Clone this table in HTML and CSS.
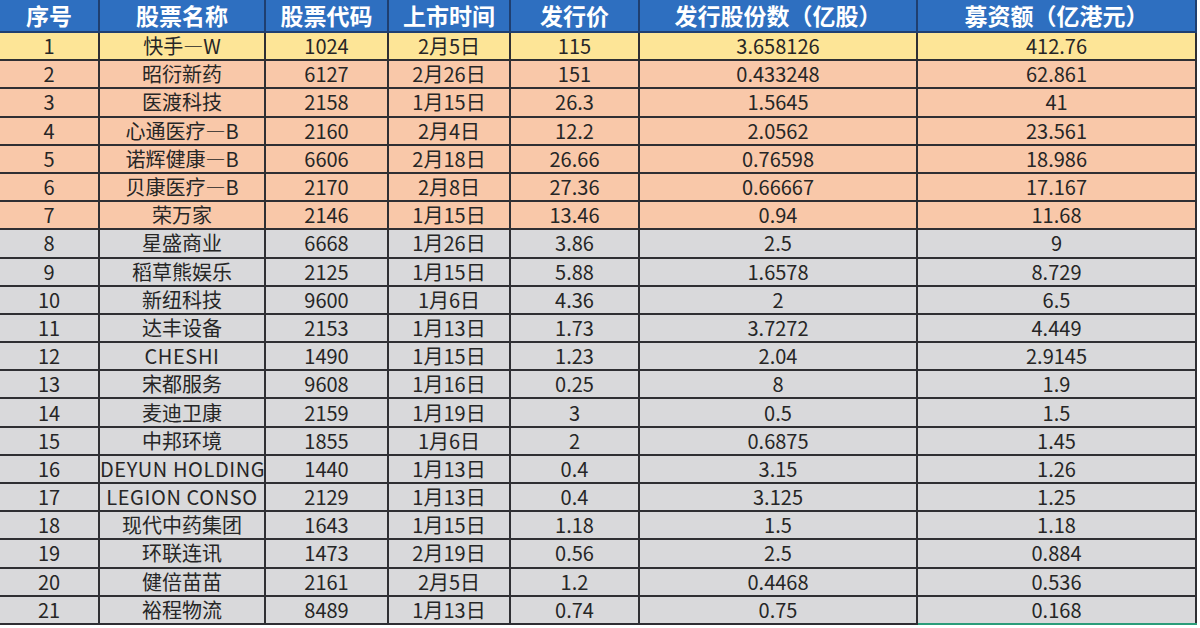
FILE: index.html
```html
<!DOCTYPE html>
<html lang="zh">
<head>
<meta charset="utf-8">
<link rel="stylesheet" href="styles.css">
</head>
<body>
<table class="ipo">
<colgroup>
<col class="c1"><col class="c2"><col class="c3"><col class="c4"><col class="c5"><col class="c6"><col class="c7">
</colgroup>
<thead>
<tr><th>序号</th><th>股票名称</th><th>股票代码</th><th>上市时间</th><th>发行价</th><th>发行股份数（亿股）</th><th>募资额（亿港元）</th></tr>
</thead>
<tbody>
<tr class="top"><td>1</td><td>快手—W</td><td>1024</td><td>2月5日</td><td>115</td><td>3.658126</td><td>412.76</td></tr>
<tr class="hot"><td>2</td><td>昭衍新药</td><td>6127</td><td>2月26日</td><td>151</td><td>0.433248</td><td>62.861</td></tr>
<tr class="hot"><td>3</td><td>医渡科技</td><td>2158</td><td>1月15日</td><td>26.3</td><td>1.5645</td><td>41</td></tr>
<tr class="hot"><td>4</td><td>心通医疗—B</td><td>2160</td><td>2月4日</td><td>12.2</td><td>2.0562</td><td>23.561</td></tr>
<tr class="hot"><td>5</td><td>诺辉健康—B</td><td>6606</td><td>2月18日</td><td>26.66</td><td>0.76598</td><td>18.986</td></tr>
<tr class="hot"><td>6</td><td>贝康医疗—B</td><td>2170</td><td>2月8日</td><td>27.36</td><td>0.66667</td><td>17.167</td></tr>
<tr class="hot"><td>7</td><td>荣万家</td><td>2146</td><td>1月15日</td><td>13.46</td><td>0.94</td><td>11.68</td></tr>
<tr><td>8</td><td>星盛商业</td><td>6668</td><td>1月26日</td><td>3.86</td><td>2.5</td><td>9</td></tr>
<tr><td>9</td><td>稻草熊娱乐</td><td>2125</td><td>1月15日</td><td>5.88</td><td>1.6578</td><td>8.729</td></tr>
<tr><td>10</td><td>新纽科技</td><td>9600</td><td>1月6日</td><td>4.36</td><td>2</td><td>6.5</td></tr>
<tr><td>11</td><td>达丰设备</td><td>2153</td><td>1月13日</td><td>1.73</td><td>3.7272</td><td>4.449</td></tr>
<tr><td>12</td><td class="latin">CHESHI</td><td>1490</td><td>1月15日</td><td>1.23</td><td>2.04</td><td>2.9145</td></tr>
<tr><td>13</td><td>宋都服务</td><td>9608</td><td>1月16日</td><td>0.25</td><td>8</td><td>1.9</td></tr>
<tr><td>14</td><td>麦迪卫康</td><td>2159</td><td>1月19日</td><td>3</td><td>0.5</td><td>1.5</td></tr>
<tr><td>15</td><td>中邦环境</td><td>1855</td><td>1月6日</td><td>2</td><td>0.6875</td><td>1.45</td></tr>
<tr><td>16</td><td class="latin">DEYUN HOLDING</td><td>1440</td><td>1月13日</td><td>0.4</td><td>3.15</td><td>1.26</td></tr>
<tr><td>17</td><td class="latin">LEGION CONSO</td><td>2129</td><td>1月13日</td><td>0.4</td><td>3.125</td><td>1.25</td></tr>
<tr><td>18</td><td>现代中药集团</td><td>1643</td><td>1月15日</td><td>1.18</td><td>1.5</td><td>1.18</td></tr>
<tr><td>19</td><td>环联连讯</td><td>1473</td><td>2月19日</td><td>0.56</td><td>2.5</td><td>0.884</td></tr>
<tr><td>20</td><td>健倍苗苗</td><td>2161</td><td>2月5日</td><td>1.2</td><td>0.4468</td><td>0.536</td></tr>
<tr class="last"><td>21</td><td>裕程物流</td><td>8489</td><td>1月13日</td><td>0.74</td><td>0.75</td><td class="sel">0.168</td></tr>
</tbody>
</table>
</body>
</html>
```

FILE: styles.css
```css
html, body {
  margin: 0;
  padding: 0;
  background: #ffffff;
}
body {
  width: 1200px;
  height: 628px;
  overflow: hidden;
  font-family: "Noto Sans CJK SC", "Noto Sans", sans-serif;
}
.ipo {
  border-collapse: collapse;
  table-layout: fixed;
  width: 1196px;
}
.c1 { width: 99px; }
.c2 { width: 166px; }
.c3 { width: 123px; }
.c4 { width: 122px; }
.c5 { width: 129px; }
.c6 { width: 278px; }
.c7 { width: 279px; }
.ipo th, .ipo td {
  border: 2px solid #2f2f33;
  text-align: center;
  padding: 0;
  white-space: nowrap;
}
.ipo td {
  overflow: hidden;
}
.ipo thead tr {
  height: 32px;
}
.ipo th {
  background: #2e6fc0;
  color: #ffffff;
  font-size: 23px;
  font-weight: 700;
  line-height: 31px;
  border-color: #1f3f70;
  border-top: none;
}
.ipo tbody tr {
  height: 28.2px;
}
.ipo td {
  background: #d9d9db;
  color: #262626;
  font-size: 20px;
  line-height: 24px;
}
.ipo td:first-child, .ipo th:first-child {
  border-left: none;
}
.ipo tr.top td {
  background: #fde597;
}
.ipo tr.hot td {
  background: #f9c8a9;
}
.ipo td.latin {
  letter-spacing: 0.6px;
}
.ipo td.sel {
  border-bottom: 2px solid #2a9d7a;
}
```
